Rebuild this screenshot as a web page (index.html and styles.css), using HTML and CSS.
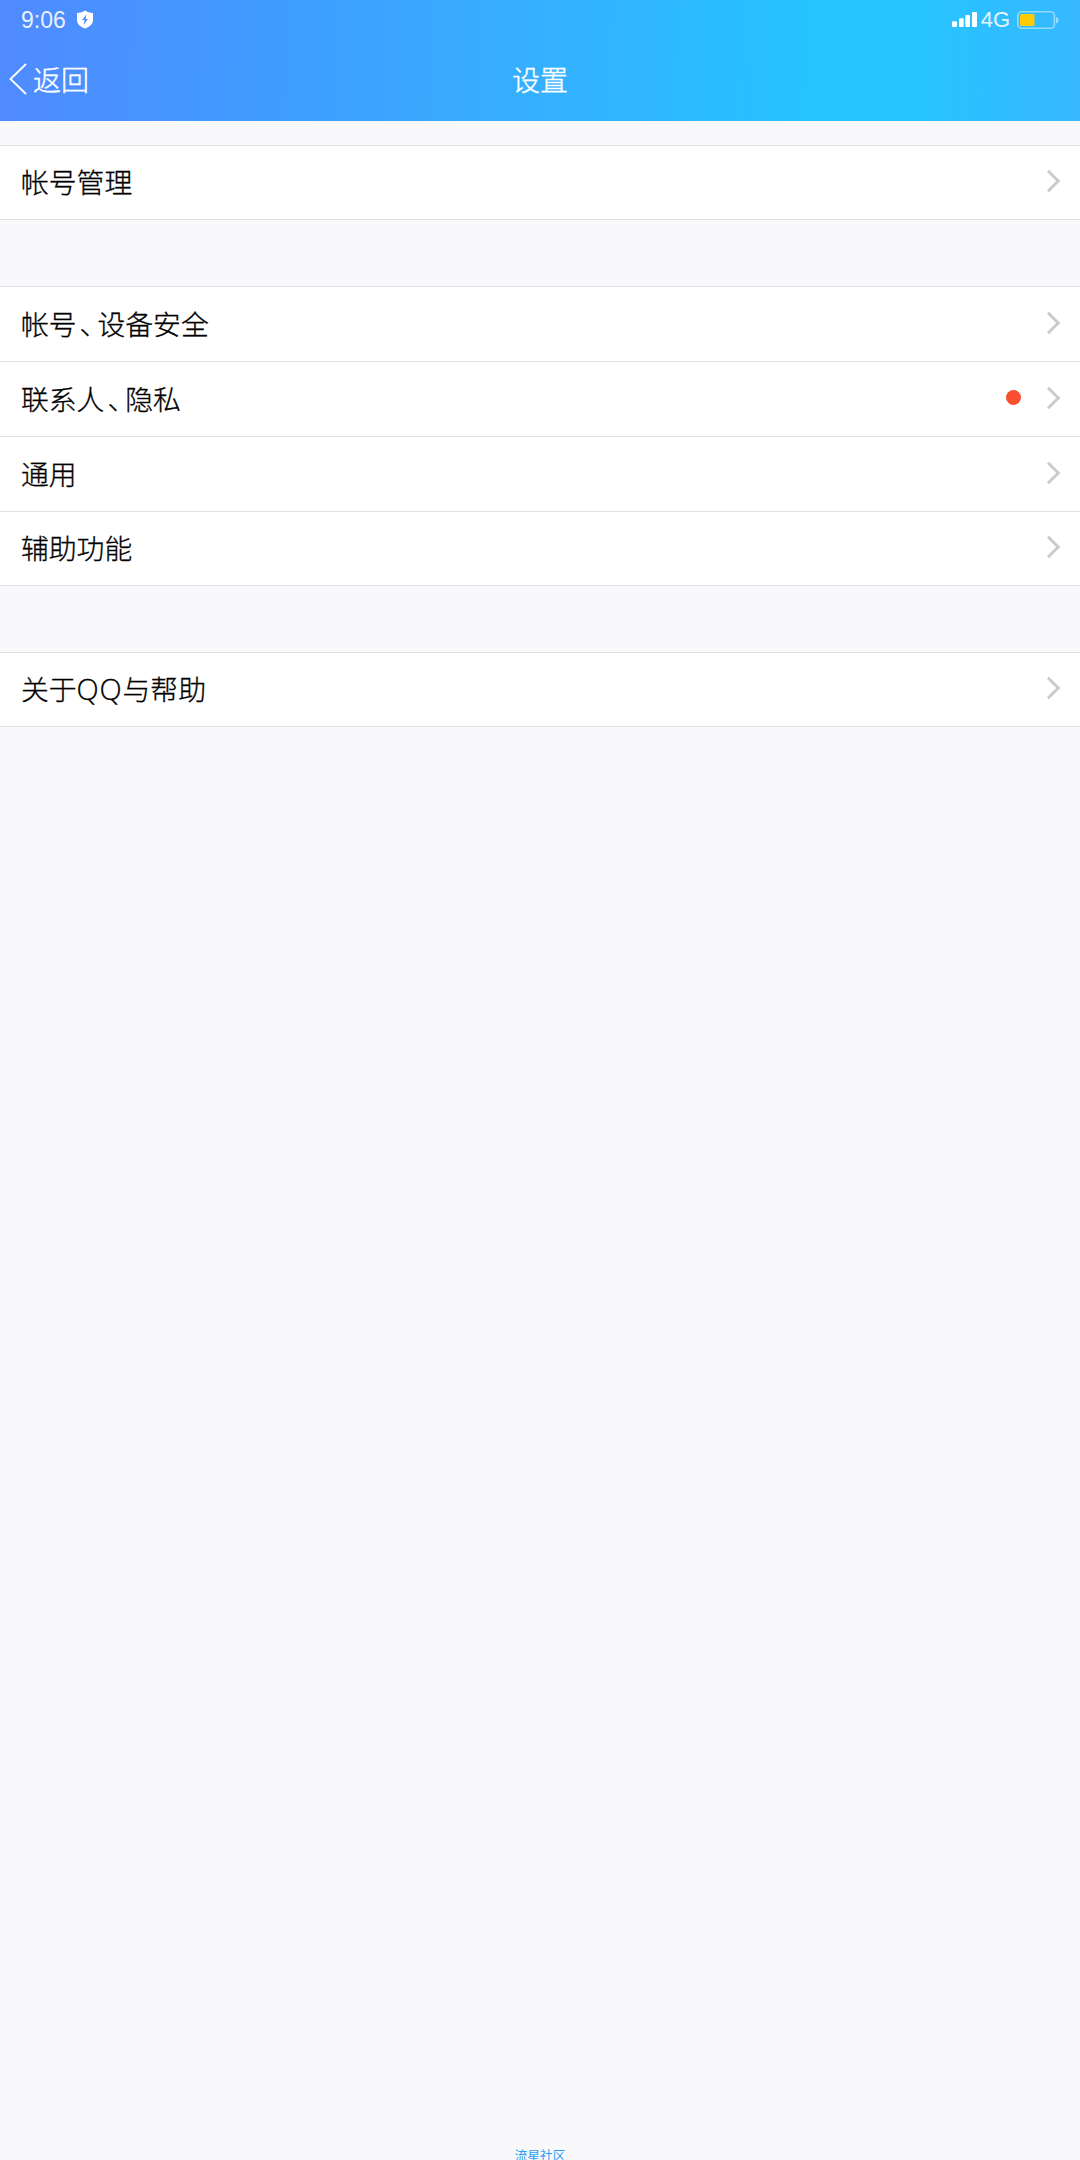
FILE: index.html
```html
<!DOCTYPE html>
<html lang="zh-CN">
<head>
    <meta charset="UTF-8">
    <title>设置</title>
    <link rel="stylesheet" href="styles.css">
</head>
<body>
    <header class="header">
        <div class="status">
            <span class="time">9:06</span>
            <svg class="shield" width="18" height="19" viewBox="0 0 18 19">
                <path fill="#fff" d="M9 .5C11 2 14 3 17 3v7c0 4-3 6.500-8 8.500C4 16.500 1 14 1 10V3c3 0 6-1 8-2.500z"/>
                <path fill="#4a90ff" d="M10.500 4.500L6 10h2.600l-1 5L12 9H9.500z"/>
            </svg>
            <div class="status-right">
                <svg class="signal" width="25" height="16" viewBox="0 0 25 16" fill="#fff">
                    <rect x="0" y="9.300" width="5" height="5.700" rx="1"/>
                    <rect x="7" y="6.300" width="4.700" height="8.700" rx="1"/>
                    <rect x="13.300" y="3" width="4.700" height="12" rx="1"/>
                    <rect x="20" y="0" width="5" height="15" rx="1"/>
                </svg>
                <span class="network">4G</span>
                <svg class="battery" width="42" height="18" viewBox="0 0 42 18">
                    <rect x=".8" y=".8" width="36.600" height="16.400" rx="3.500" fill="none" stroke="#fff" stroke-opacity=".45" stroke-width="1.600"/>
                    <path d="M39 6c3.300 1.200 3.300 5.300 0 6.500z" fill="#fff" fill-opacity=".5"/>
                    <rect x="3" y="3" width="14.500" height="12" rx="1.500" fill="#ffcb05"/>
                </svg>
            </div>
        </div>
        <nav class="navbar">
            <a class="back">
                <svg width="18" height="32" viewBox="0 0 18 32">
                    <path d="M17 1L1.500 16 17 31" fill="none" stroke="#fff" stroke-width="1.800"/>
                </svg>
                <span>返回</span>
            </a>
            <h1 class="title">设置</h1>
        </nav>
    </header>

    <ul class="list first">
        <li><span>帐号管理</span><i class="arrow"></i></li>
    </ul>
    <ul class="list">
        <li><span>帐号<span class="comma">、</span>设备安全</span><i class="arrow"></i></li>
        <li><span>联系人<span class="comma">、</span>隐私</span><i class="dot"></i><i class="arrow"></i></li>
        <li><span>通用</span><i class="arrow"></i></li>
        <li><span>辅助功能</span><i class="arrow"></i></li>
    </ul>
    <ul class="list">
        <li><span>关于<span class="latin">QQ</span>与帮助</span><i class="arrow"></i></li>
    </ul>

    <footer class="footer">流星社区</footer>
</body>
</html>
```
FILE: styles.css
```css
* {
    box-sizing: border-box;
}
body {
    margin: 0;
    height: 2160px;
    display: flex;
    flex-direction: column;
    overflow: hidden;
    background: #f9f9fb;
    color: #000;
    font-family: "Noto Sans CJK SC", sans-serif;
    font-weight: 300;
}
.header {
    height: 121px;
    color: #fff;
    background: linear-gradient(92deg, #508aff 0%, #3e9fff 29%, #38acff 45%, #25c4ff 76%, #25c4ff 84%, #38b8ff 100%);
}
.status {
    display: flex;
    align-items: center;
    height: 39px;
    padding: 0 21px;
    font-family: "Liberation Sans", sans-serif;
    font-size: 23px;
    line-height: 40px;
    color: rgba(255, 255, 255, .9);
}
.shield {
    margin-left: 10px;
}
.status-right {
    display: flex;
    align-items: center;
    margin-left: auto;
}
.network {
    margin: 0 7px 0 4px;
    font-size: 22px;
}
.navbar {
    display: grid;
    grid-template-columns: 1fr auto 1fr;
    align-items: center;
    height: 80px;
    font-size: 28px;
    -webkit-text-stroke: .4px #fff;
}
.back {
    display: flex;
    align-items: center;
    height: 80px;
    padding-left: 9px;
    gap: 6px;
}
.title {
    margin: 0;
    font-size: 28px;
    font-weight: 300;
}
.list {
    margin: 0 0 66px;
    padding: 0;
    list-style: none;
    background: #fff;
    border-bottom: 1px solid #e0e1e3;
    font-size: 27.800px;
    -webkit-text-stroke: .3px #000;
}
.first {
    margin-top: 24px;
}
.list li {
    display: flex;
    align-items: center;
    height: 75px;
    padding: 0 21px 3px;
    border-top: 1px solid #e0e1e3;
}
.list li:last-child {
    height: 74px;
}
/* half-width comma */
.comma {
    font-feature-settings: "halt";
    margin: 0 4px 0 3px;
}
.latin {
    font-family: "Open Sans", sans-serif;
    font-size: 29px;
    letter-spacing: .8px;
}
.dot {
    width: 15px;
    height: 15px;
    margin-left: auto;
    border-radius: 50%;
    background: #fa5032;
}
.arrow {
    width: 16px;
    height: 16px;
    margin-left: auto;
    margin-right: 2px;
    border: solid #cbcbcb;
    border-width: 3px 3px 0 0;
    transform: rotate(45deg);
}
.dot + .arrow {
    margin-left: 20px;
}
.footer {
    margin-top: auto;
    height: 14px;
    font-size: 12.800px;
    font-weight: 400;
    line-height: 17px;
    text-align: center;
    color: #2b9ff5;
}
```
